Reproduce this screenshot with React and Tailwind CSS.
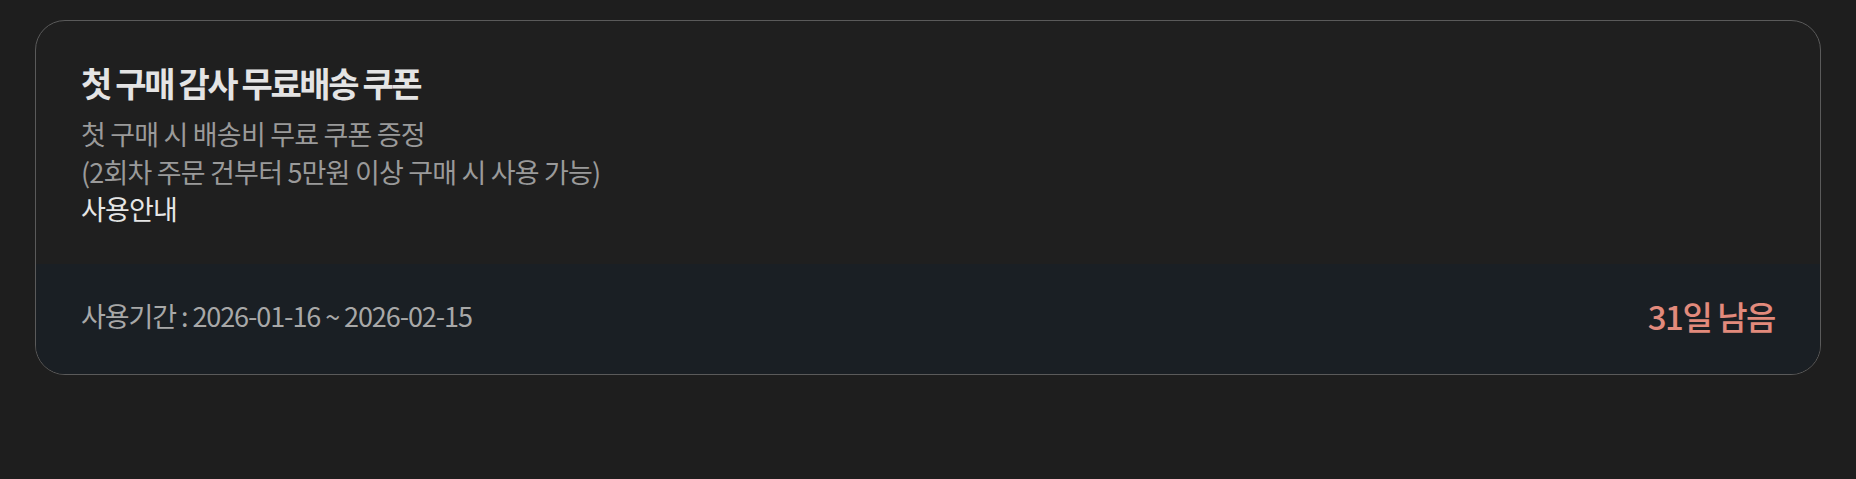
// ============================================
// Page: Coupon card
// ============================================

const coupon = {
  title: "첫 구매 감사 무료배송 쿠폰",
  lines: ["첫 구매 시 배송비 무료 쿠폰 증정", "(2회차 주문 건부터 5만원 이상 구매 시 사용 가능)"],
  period: "사용기간 : 2026-01-16 ~ 2026-02-15",
  remaining: "31일 남음",
};

const App = () => {
  return (
    <div className="min-h-screen bg-[#1e1e1e] px-[35px] pt-[20px] font-['Noto_Sans_CJK_KR','Noto_Sans',sans-serif]">
      <div className="rounded-[30px] border-[1.5px] border-[#5a5a5a] overflow-hidden bg-[#1f1f1f]">
        {/* Body */}
        <div className="px-[45px] pt-[42px] pb-[36px]">
          <h2 className="text-[34px] leading-[39px] font-bold tracking-[-0.07em] text-[#e4e4e4]">
            {coupon.title}
          </h2>
          <div className="mt-[13px] text-[27px] leading-[37.5px] tracking-[-0.03em]">
            {coupon.lines.map((line) => (
              <p key={line} className="text-[#9a9a9a]">{line}</p>
            ))}
            <button className="block text-[#e6e6e6]">사용안내</button>
          </div>
        </div>

        {/* Footer */}
        <div className="h-[110px] bg-[#1a1f24] px-[45px] flex items-center justify-between">
          <p className="text-[27px] tracking-[-0.04em] text-[#a8a8a8] -mt-[4px]">{coupon.period}</p>
          <p className="text-[33px] font-medium tracking-[-0.045em] text-[#e28a7c] -mt-[4px]">{coupon.remaining}</p>
        </div>
      </div>
    </div>
  );
};

export default App;
